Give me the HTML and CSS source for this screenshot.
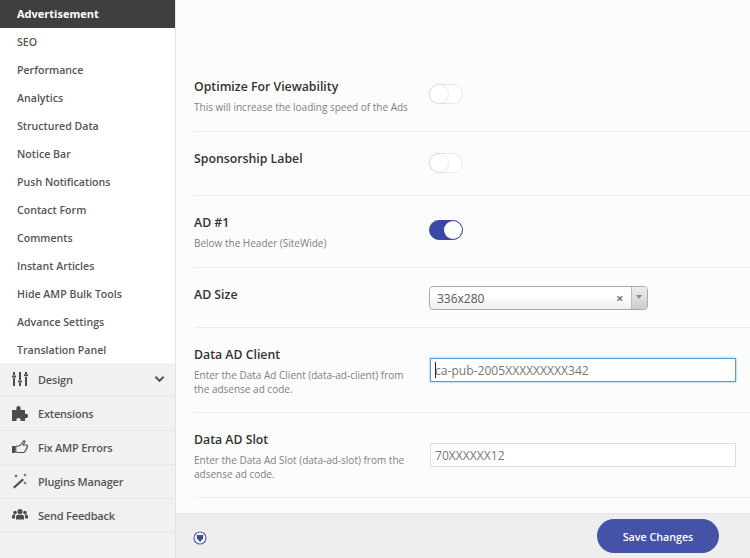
FILE: index.html
```html
<!DOCTYPE HTML>
<html lang="en">
    <head>
        <meta charset="utf-8">
        <title>Advertisement settings</title>

        <link rel="stylesheet" href="styles.css">
    </head>
    <body>
        <div class="page">
            <div class="sidebar">
                <ul class="sub_list">
                    <li class="sub_item active">Advertisement</li>
                    <li class="sub_item">SEO</li>
                    <li class="sub_item">Performance</li>
                    <li class="sub_item">Analytics</li>
                    <li class="sub_item">Structured Data</li>
                    <li class="sub_item">Notice Bar</li>
                    <li class="sub_item">Push Notifications</li>
                    <li class="sub_item">Contact Form</li>
                    <li class="sub_item">Comments</li>
                    <li class="sub_item">Instant Articles</li>
                    <li class="sub_item">Hide AMP Bulk Tools</li>
                    <li class="sub_item">Advance Settings</li>
                    <li class="sub_item last">Translation Panel</li>
                </ul>
                <ul class="menu_list">
                    <li class="menu_item">
                        <svg class="menu_icon" viewBox="0 0 16 16"><path d="M1 1h2v3H1zM1 7h2v8H1zM0 4.500h4v2H0zM7 1h2v8H7zM7 12h2v3H7zM6 9.500h4v2H6zM13 1h2v2h-2zM13 6h2v9h-2zM12 3.200h4v2h-4z"/></svg>
                        <span>Design</span>
                        <svg class="menu_arrow" viewBox="0 0 12 8"><path d="M1.500 1.500 6 6l4.500-4.500" fill="none" stroke="#555" stroke-width="2.200"/></svg>
                    </li>
                    <li class="menu_item">
                        <svg class="menu_icon" viewBox="0 0 16 16"><path d="M0 5h4.500C4 3 4.500 1 6.500 1S9 3 8.500 5H13v4c2-.5 3 .5 3 2s-1 2.500-3 2v3H8.500c.5-2-.5-3-2-3s-2.500 1-2 3H0V5z"/></svg>
                        <span>Extensions</span>
                    </li>
                    <li class="menu_item">
                        <svg class="menu_icon" viewBox="0 0 16 16"><path d="M0 7h3.200v7H0z"/><path d="M3.800 7.500 8 6.500 12 1.500l1 1-2 3.500h3.500c1.500 0 1.500 2 .3 2.200.4 1-.2 2-.9 2.100.2 1-.3 1.800-1 2 0 1-.7 1.200-1.700 1.200H7C5.800 13.500 5 13 3.800 13z" fill="none" stroke="#4c4c4c" stroke-width="1.100"/></svg>
                        <span>Fix AMP Errors</span>
                    </li>
                    <li class="menu_item">
                        <svg class="menu_icon" viewBox="0 0 16 16"><path d="M10.500 5.500 12 7 2.500 15.500 1 14zM4 1l.6 1.400L6 3l-1.400.6L4 5l-.6-1.400L2 3l1.400-.6zM13 0l.5 1.500L15 2l-1.500.5L13 4l-.5-1.500L11 2l1.500-.5zM13 8l.5 1.500 1.500.5-1.500.5L13 12l-.5-1.500L11 10l1.500-.5z"/></svg>
                        <span>Plugins Manager</span>
                    </li>
                    <li class="menu_item">
                        <svg class="menu_icon" viewBox="0 0 16 16"><circle cx="8" cy="4.500" r="2.600"/><circle cx="3" cy="5.500" r="1.800"/><circle cx="13" cy="5.500" r="1.800"/><path d="M4 12.500V10C4 8.500 5 7.700 6 7.700h4c1 0 2 .8 2 2.300v2.500zM0 11.500V9c0-1 1-1.500 2-1.500h1.500C3 8.200 3 9 3 10v1.500zM16 11.500V9c0-1-1-1.500-2-1.500h-1.500c.5.700.5 1.500.5 2.500v1.500z"/></svg>
                        <span>Send Feedback</span>
                    </li>
                </ul>
            </div>
            <div class="main">
                <div class="settings">
                    <div class="row row_1">
                        <div class="row_text">
                            <h3>Optimize For Viewability</h3>
                            <p>This will increase the loading speed of the Ads</p>
                        </div>
                        <div class="toggle"></div>
                    </div>
                    <div class="row row_2">
                        <div class="row_text">
                            <h3>Sponsorship Label</h3>
                        </div>
                        <div class="toggle"></div>
                    </div>
                    <div class="row row_3">
                        <div class="row_text">
                            <h3>AD #1</h3>
                            <p>Below the Header (SiteWide)</p>
                        </div>
                        <div class="toggle on"></div>
                    </div>
                    <div class="row row_4">
                        <div class="row_text">
                            <h3>AD Size</h3>
                        </div>
                        <div class="select">
                            <span class="select_value">336x280</span>
                            <span class="select_clear">×</span>
                            <span class="select_arrow"></span>
                        </div>
                    </div>
                    <div class="row row_5">
                        <div class="row_text">
                            <h3>Data AD Client</h3>
                            <p>Enter the Data Ad Client (data-ad-client) from the adsense ad code.</p>
                        </div>
                        <div class="input focus"><span class="caret"></span>ca-pub-2005XXXXXXXXX342</div>
                    </div>
                    <div class="row row_6">
                        <div class="row_text">
                            <h3>Data AD Slot</h3>
                            <p>Enter the Data Ad Slot (data-ad-slot) from the adsense ad code.</p>
                        </div>
                        <div class="input">70XXXXXX12</div>
                    </div>
                </div>
                <div class="footer">
                    <svg class="footer_icon" viewBox="0 0 14 14"><circle cx="7" cy="7" r="6" fill="#fff" stroke="#5a63a8" stroke-width="1.200"/><path d="M3.800 4h6.400v3.300L7 11 3.800 7.300z" fill="#3a4aa0"/></svg>
                    <div class="save_btn">Save Changes</div>
                </div>
            </div>
        </div>
    </body>
</html>
```

FILE: styles.css
```css
*{margin:0;padding:0;list-style:none;box-sizing:border-box;}
html,body{height:100%;overflow:hidden;}
body{font-family:"Open Sans","Noto Sans",sans-serif;color:#333;background-color:#f1f1f1;}
.page{
    display:flex;
    width:750px;
    height:558px;
}
.sidebar{
    flex:none;
    width:176px;
    background-color:#f1f1f1;
    border-right:1px solid #e4e4e4;
}
.sub_list{
    background-color:#fff;
}
.sub_item{
    height:28px;
    padding-left:17px;
    font-size:10.600px;
    font-weight:600;
    line-height:28px;
    color:#555;
}
.sub_item.last{
    height:27px;
}
.sub_item.active{
    font-size:11px;
    font-weight:700;
    color:#fff;
    background-color:#3f3f3f;
}
.menu_item{
    display:flex;
    align-items:center;
    height:34px;
    padding-left:12px;
    padding-bottom:1px;
    font-size:11px;
    font-weight:600;
    letter-spacing:-.2px;
    color:#555;
    border-bottom:1px solid #e9e9e9;
}
.menu_icon{
    flex:none;
    width:16px;
    height:16px;
    margin-right:10px;
    fill:#4c4c4c;
}
.menu_arrow{
    flex:none;
    width:11px;
    height:8px;
    margin-left:auto;
    margin-right:10px;
}
.main{
    flex:1;
    display:flex;
    flex-direction:column;
    min-width:0;
}
.settings{
    flex:1;
    padding-top:68px;
    padding-left:18px;
    background-color:#fcfcfc;
}
.row{
    display:flex;
    align-items:flex-start;
    padding-top:17px;
    border-bottom:1px solid #eee;
}
.row_1{height:64px;padding-top:9px;}
.row_2{height:64px;}
.row_3{height:72px;}
.row_4{height:60px;}
.row_5{height:85px;}
.row_6{height:85px;}
.row_text{
    flex:none;
    width:235px;
    padding-right:14px;
}
.row_text h3{
    font-size:12.300px;
    font-weight:600;
    line-height:20px;
    color:#333;
}
.row_text p{
    margin-top:4px;
    font-size:10px;
    line-height:13.500px;
    color:#808080;
}
.toggle{
    position:relative;
    width:34px;
    height:20px;
    margin-top:7px;
    background-color:#fff;
    border:1px solid #eaeaea;
    border-radius:10px;
}
.row_2 .toggle{
    margin-top:4px;
}
.toggle::after{
    content:"";
    position:absolute;
    top:0;
    left:0;
    width:18px;
    height:18px;
    background-color:#fff;
    border-radius:50%;
    box-shadow:0 0 3px rgba(0,0,0,.18);
}
.toggle.on{
    background-color:#3949a3;
    border-color:#3949a3;
}
.toggle.on::after{
    left:14px;
    box-shadow:none;
}
.select{
    display:flex;
    align-items:center;
    width:219px;
    height:24px;
    margin-top:1px;
    font-size:12px;
    color:#555;
    background-image:linear-gradient(#fff 40%,#eee);
    border:1px solid #aaa;
    border-radius:4px;
}
.select_value{
    flex:1;
    padding-left:7px;
}
.select_clear{
    width:15px;
    font-size:13px;
    font-weight:700;
    color:#777;
}
.select_arrow{
    position:relative;
    flex:none;
    width:16px;
    height:100%;
    background-image:linear-gradient(#eee,#ccc);
    border-left:1px solid #bbb;
    border-radius:0 3px 3px 0;
}
.select_arrow::after{
    content:"";
    position:absolute;
    top:8px;
    left:4px;
    border:3px solid transparent;
    border-top:4px solid #888;
}
.input{
    position:relative;
    width:306px;
    height:24px;
    margin-top:13px;
    margin-left:1px;
    padding-left:4px;
    font-size:12.100px;
    line-height:24px;
    color:#777;
    background-color:#fff;
    border:1px solid #ddd;
}
.input.focus{
    border-color:#5b9dd9;
    box-shadow:0 0 2px rgba(30,140,190,.6);
}
.caret{
    position:absolute;
    top:3px;
    left:4px;
    width:1px;
    height:16px;
    background-color:#222;
}
.footer{
    flex:none;
    display:flex;
    align-items:center;
    justify-content:space-between;
    height:45px;
    padding:0 31px 0 17px;
    background-color:#eee;
    border-top:1px solid #e4e4e4;
}
.footer_icon{
    width:14px;
    height:14px;
    margin-top:4px;
}
.save_btn{
    width:122px;
    height:34px;
    font-size:10.700px;
    font-weight:600;
    line-height:36px;
    text-align:center;
    color:#fff;
    background-color:#4452a8;
    border-radius:17px;
}
```
